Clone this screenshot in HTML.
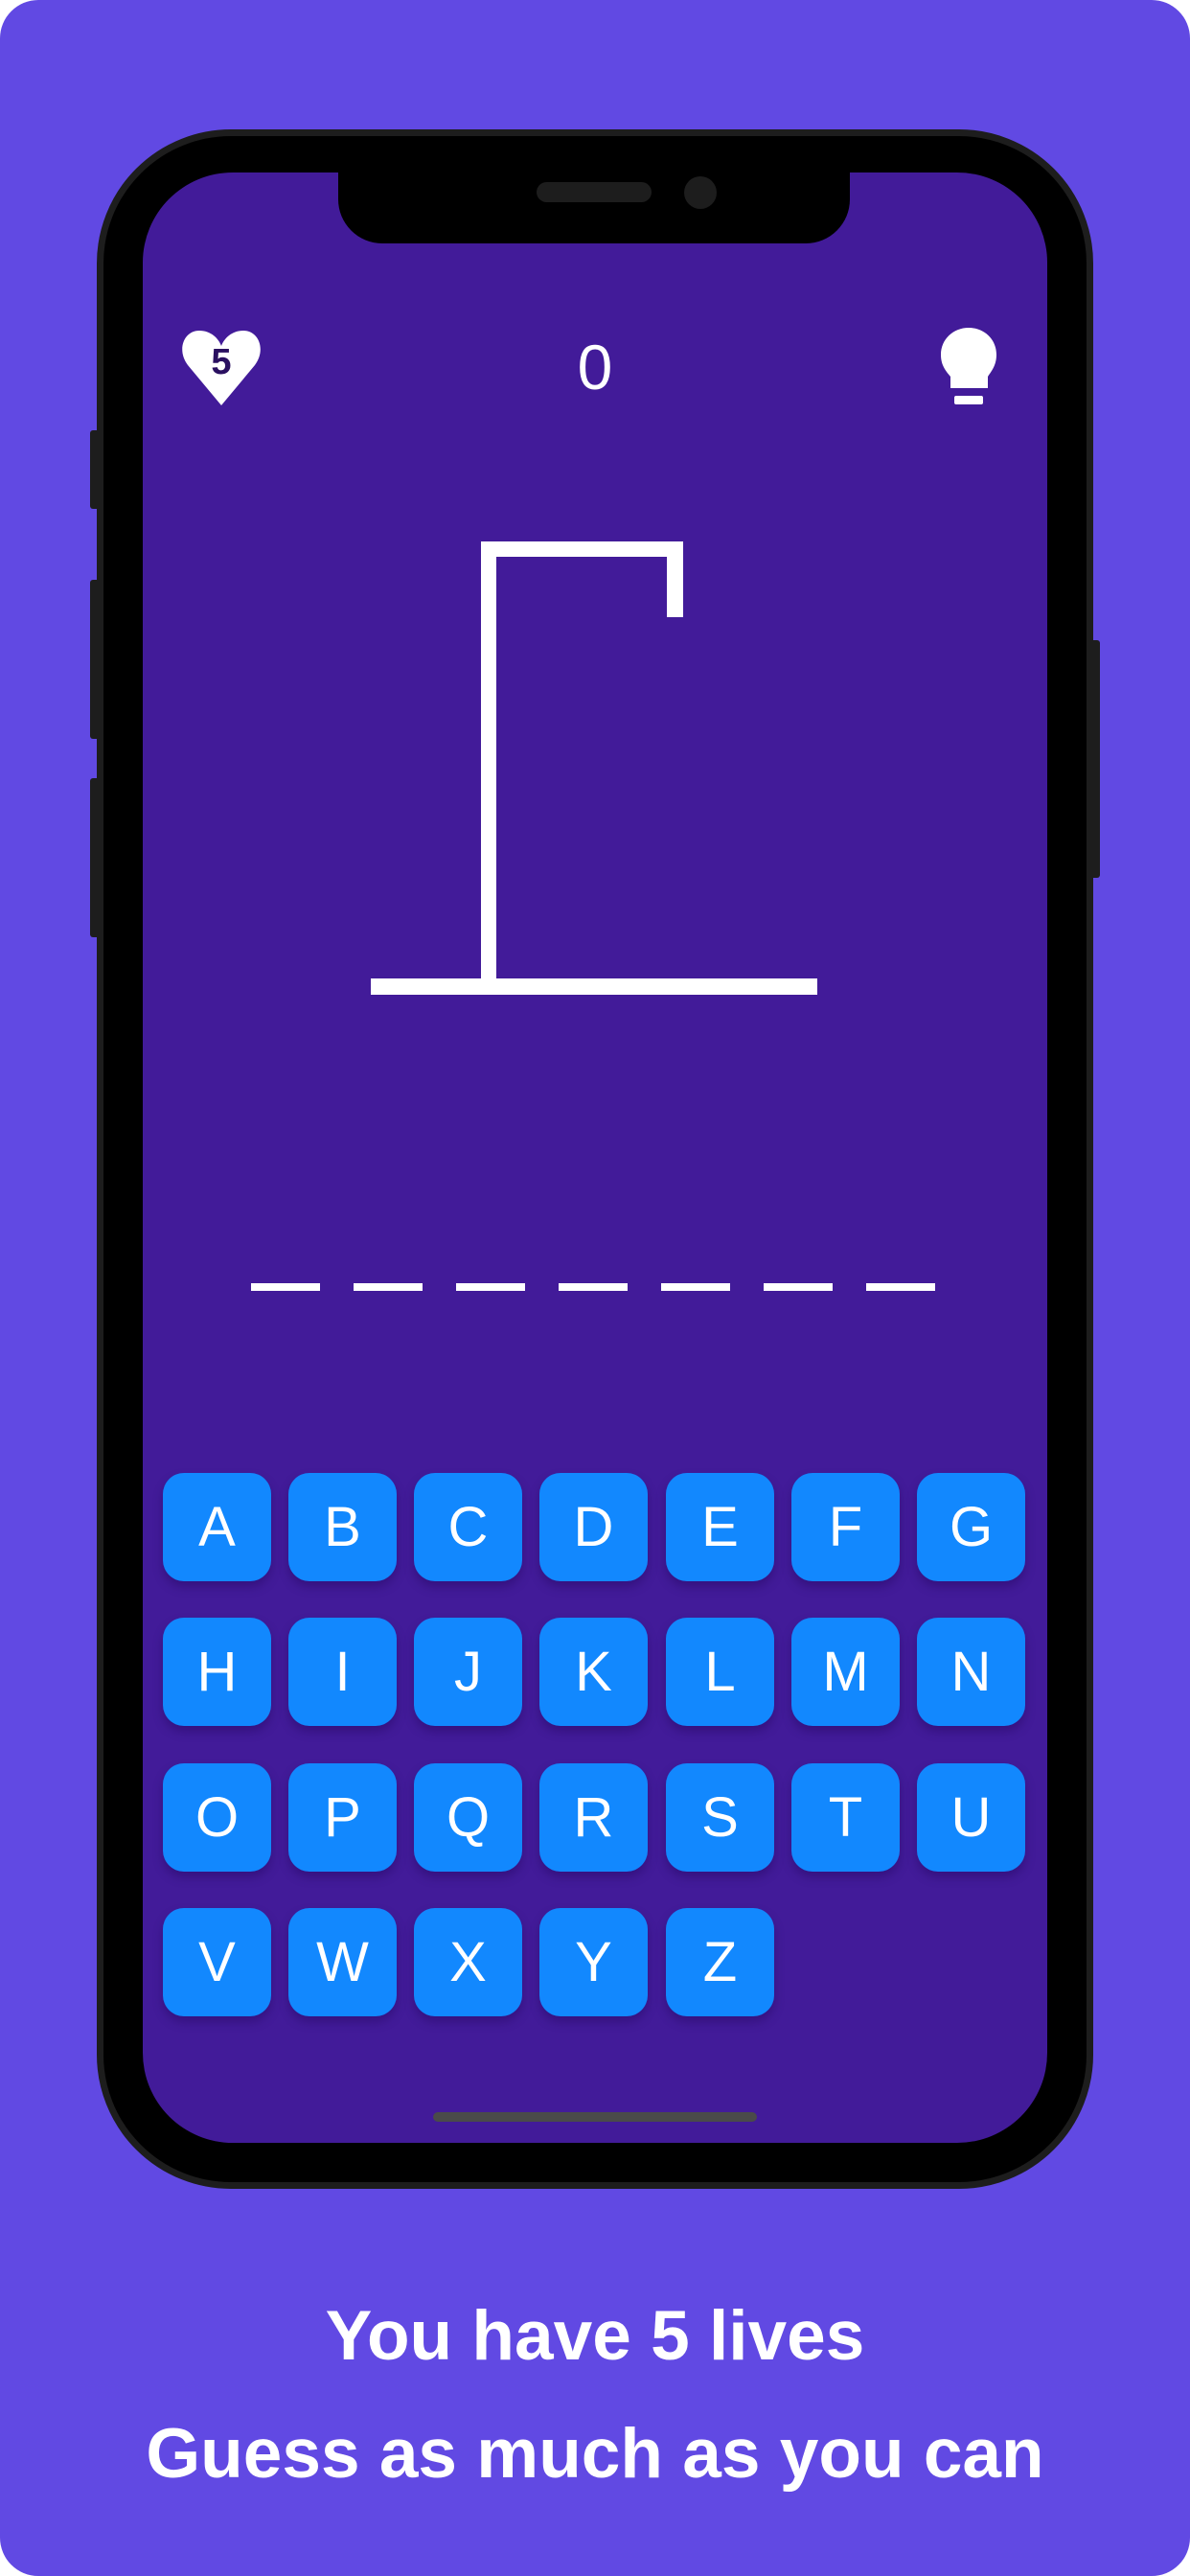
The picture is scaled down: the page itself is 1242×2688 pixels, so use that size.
<!DOCTYPE html>
<html><head><meta charset="utf-8"><style>
*{margin:0;padding:0;box-sizing:border-box}
html,body{width:1242px;height:2688px;background:#fff;overflow:hidden}
.bg{position:absolute;left:0;top:0;width:1242px;height:2688px;background:#6149E3;border-radius:40px}
.frame{position:absolute;left:101px;top:135px;width:1040px;height:2149px;background:#000;border:7px solid #1d1d1d;border-radius:140px}
.btn{position:absolute;background:#1d1d1d;border-radius:3px}
.screen{position:absolute;left:149px;top:180px;width:944px;height:2056px;background:#421B99;border-radius:94px;overflow:hidden}
.notch{position:absolute;left:204px;top:-10px;width:534px;height:84px;background:#000;border-radius:0 0 46px 46px}
.spk{position:absolute;left:207px;top:20px;width:120px;height:21px;background:#1d1d1d;border-radius:11px}
.cam{position:absolute;left:361px;top:14px;width:34px;height:34px;background:#1d1d1d;border-radius:50%}
.w{position:absolute;background:#fff}
.key{position:absolute;width:113px;height:113px;background:#1288FE;border-radius:22px;box-shadow:0 6px 10px rgba(30,0,80,.35);color:#fff;font:400 58px "Liberation Sans",sans-serif;display:flex;align-items:center;justify-content:center}
.txt{position:absolute;left:0;width:1242px;text-align:center;color:#fff;font:bold 73px "Liberation Sans",sans-serif}
</style></head><body>
<div class="bg"></div>
<div class="btn" style="left:94px;top:449px;width:10px;height:82px"></div>
<div class="btn" style="left:94px;top:605px;width:10px;height:166px"></div>
<div class="btn" style="left:94px;top:812px;width:10px;height:166px"></div>
<div class="btn" style="left:1138px;top:668px;width:10px;height:248px"></div>
<div class="frame"></div>
<div class="screen">
  <div class="notch"><div class="spk"></div><div class="cam"></div></div>
  <svg style="position:absolute;left:39px;top:163px" width="86" height="80" viewBox="0 0 86 80">
    <path d="M43 80 L8 38 C-4 22 4 2 20 2 C32 2 40 10 43 18 C46 10 54 2 66 2 C82 2 90 22 78 38 Z" fill="#fff"/>
    <text x="43" y="47" text-anchor="middle" font-family="Liberation Sans,sans-serif" font-weight="bold" font-size="38" fill="#2a1060">5</text>
  </svg>
  <div style="position:absolute;left:372px;top:165px;width:200px;text-align:center;color:#fff;font:400 66px 'Liberation Sans',sans-serif">0</div>
  <svg style="position:absolute;left:831px;top:160px" width="62" height="84" viewBox="0 0 62 84">
    <path d="M31 2 C47 2 60 14 60 30 C60 42 54 48 51 53 L51 65 L12 65 L12 53 C8 48 2 42 2 30 C2 14 15 2 31 2 Z" fill="#fff"/>
    <rect x="16" y="73" width="30" height="9" rx="2" fill="#fff"/>
  </svg>
  <div class="w" style="left:353px;top:385px;width:16px;height:465px"></div>
  <div class="w" style="left:353px;top:385px;width:211px;height:16px"></div>
  <div class="w" style="left:547px;top:385px;width:17px;height:79px"></div>
  <div class="w" style="left:238px;top:841px;width:466px;height:17px"></div>
  <div class="w" style="left:113px;top:1159px;width:72px;height:8px"></div>
  <div class="w" style="left:220px;top:1159px;width:72px;height:8px"></div>
  <div class="w" style="left:327px;top:1159px;width:72px;height:8px"></div>
  <div class="w" style="left:434px;top:1159px;width:72px;height:8px"></div>
  <div class="w" style="left:541px;top:1159px;width:72px;height:8px"></div>
  <div class="w" style="left:648px;top:1159px;width:72px;height:8px"></div>
  <div class="w" style="left:755px;top:1159px;width:72px;height:8px"></div>
  <div class="key" style="left:21px;top:1357px">A</div>
  <div class="key" style="left:152px;top:1357px">B</div>
  <div class="key" style="left:283px;top:1357px">C</div>
  <div class="key" style="left:414px;top:1357px">D</div>
  <div class="key" style="left:546px;top:1357px">E</div>
  <div class="key" style="left:677px;top:1357px">F</div>
  <div class="key" style="left:808px;top:1357px">G</div>
  <div class="key" style="left:21px;top:1508px">H</div>
  <div class="key" style="left:152px;top:1508px">I</div>
  <div class="key" style="left:283px;top:1508px">J</div>
  <div class="key" style="left:414px;top:1508px">K</div>
  <div class="key" style="left:546px;top:1508px">L</div>
  <div class="key" style="left:677px;top:1508px">M</div>
  <div class="key" style="left:808px;top:1508px">N</div>
  <div class="key" style="left:21px;top:1660px">O</div>
  <div class="key" style="left:152px;top:1660px">P</div>
  <div class="key" style="left:283px;top:1660px">Q</div>
  <div class="key" style="left:414px;top:1660px">R</div>
  <div class="key" style="left:546px;top:1660px">S</div>
  <div class="key" style="left:677px;top:1660px">T</div>
  <div class="key" style="left:808px;top:1660px">U</div>
  <div class="key" style="left:21px;top:1811px">V</div>
  <div class="key" style="left:152px;top:1811px">W</div>
  <div class="key" style="left:283px;top:1811px">X</div>
  <div class="key" style="left:414px;top:1811px">Y</div>
  <div class="key" style="left:546px;top:1811px">Z</div>
  <div style="position:absolute;left:303px;top:2024px;width:338px;height:10px;background:#4a4a4a;border-radius:5px"></div>
</div>
<div class="txt" style="top:2396px">You have 5 lives</div>
<div class="txt" style="top:2519px">Guess as much as you can</div>
</body></html>
